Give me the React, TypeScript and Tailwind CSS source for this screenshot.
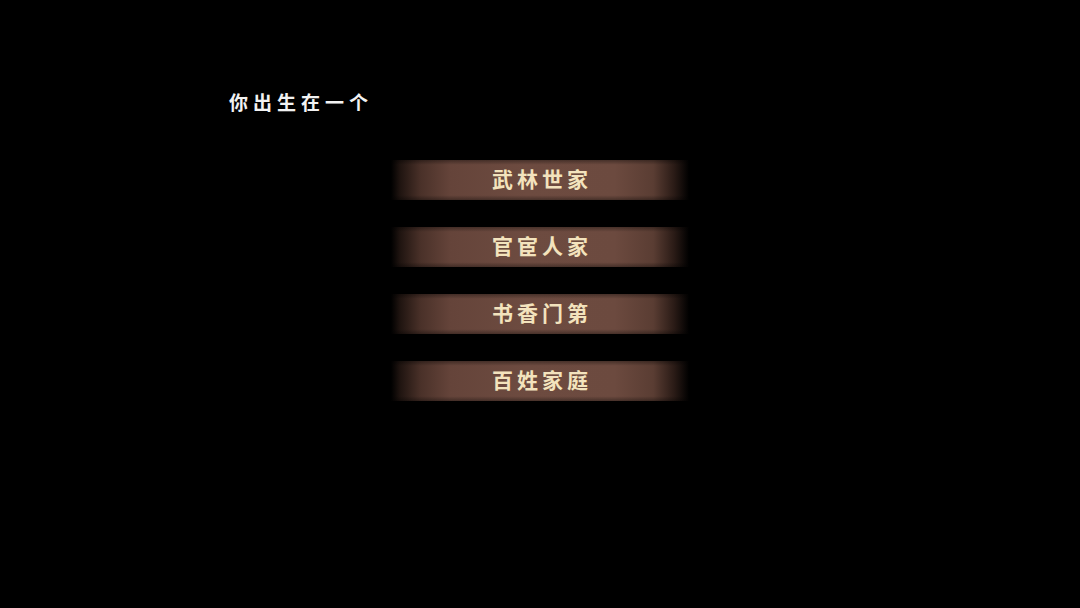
const choices = ['武林世家', '官宦人家', '书香门第', '百姓家庭'];

function ChoiceBar({ label }: { label: string }) {
  return (
    <button className="relative flex h-[40px] w-[298px] items-center justify-center bg-[linear-gradient(90deg,#000_0%,#1f1410_3%,#4a3129_10%,#65443a_20%,#6d4b40_45%,#6c4a3f_75%,#5a3d33_88%,#2a1b16_95%,#000_100%)]">
      {/* soft darker rim on top and bottom edges */}
      <span className="pointer-events-none absolute inset-0 bg-[linear-gradient(180deg,rgba(0,0,0,0.35)_0%,rgba(0,0,0,0)_12%,rgba(0,0,0,0)_88%,rgba(0,0,0,0.35)_100%)]" />
      <span className="relative -mt-[1px] pl-[4px] text-[21px] font-bold tracking-[4px] text-[#f3e3bd] [font-family:'Noto_Sans_CJK_SC',sans-serif]">
        {label}
      </span>
    </button>
  );
}

export default function App() {
  return (
    <div className="flex h-[608px] w-[1080px] flex-col bg-black [font-family:'Noto_Sans_CJK_SC',sans-serif]">
      <h1 className="pl-[229px] pt-[88px] text-[19px] font-bold tracking-[5px] text-[#f2f2f2]">你出生在一个</h1>
      <div className="mt-[43px] flex flex-col items-center gap-[27px]">
        {choices.map((c) => (
          <ChoiceBar key={c} label={c} />
        ))}
      </div>
    </div>
  );
}
